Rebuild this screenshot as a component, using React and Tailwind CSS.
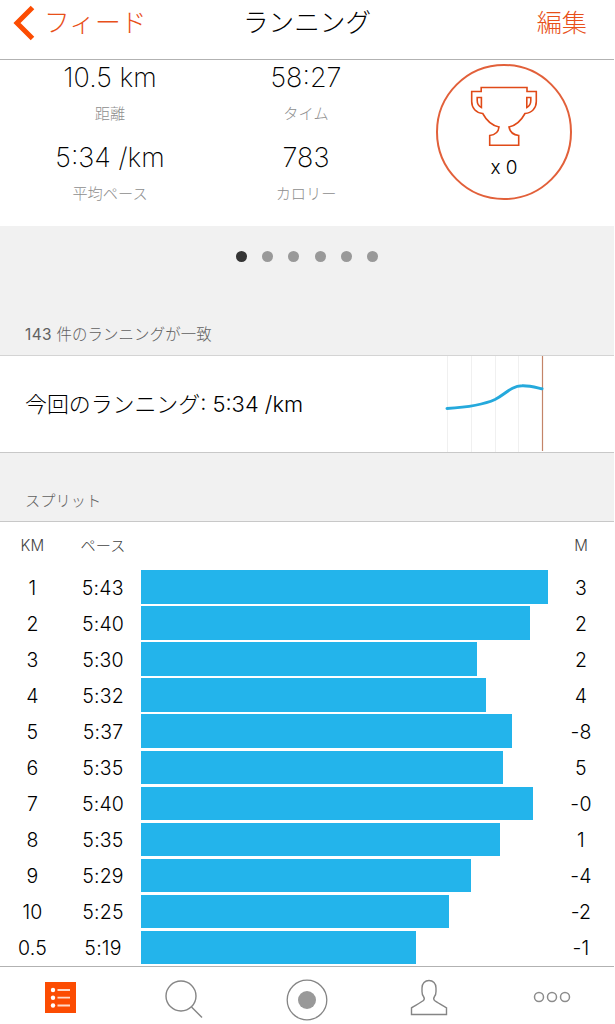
const splits = [
  { km: '1', pace: '5:43', width: 408, elev: '3' },
  { km: '2', pace: '5:40', width: 389, elev: '2' },
  { km: '3', pace: '5:30', width: 335.5, elev: '2' },
  { km: '4', pace: '5:32', width: 345, elev: '4' },
  { km: '5', pace: '5:37', width: 370.5, elev: '-8' },
  { km: '6', pace: '5:35', width: 362, elev: '5' },
  { km: '7', pace: '5:40', width: 391.5, elev: '-0' },
  { km: '8', pace: '5:35', width: 359, elev: '1' },
  { km: '9', pace: '5:29', width: 330, elev: '-4' },
  { km: '10', pace: '5:25', width: 308, elev: '-2' },
  { km: '0.5', pace: '5:19', width: 275, elev: '-1' },
];

function Stat({ value, label }) {
  return (
    <div className="flex h-20 flex-col items-center">
      <div className="text-[27px] leading-[36px] font-extralight text-black">{value}</div>
      <div className="mt-[7px] text-[15.200px] leading-[22px] font-light text-[#8e8e8e]">{label}</div>
    </div>
  );
}

function Trophy() {
  return (
    <svg width="70" height="62" viewBox="0 0 70 62" fill="none" stroke="#e04a18" strokeWidth="1.6">
      <path d="M12.200 2.500H58V6.500H67.300V16.500C67.300 23 63 28 56 28.500C52.500 35 47.500 40.500 40 42C41 47 44.500 50 49.700 50.500V60.300H20.700V50.500C26 50 29.500 47 30 42C22.500 40.500 17.200 35 13.700 28.500C7 28 2.700 23 2.700 16.500V6.500H12.200Z" />
      <path d="M8.200 12.500H12.400V22.500C9.500 21 8.200 18.500 8.200 15.500Z" />
      <path d="M61.800 12.500H57.800V22.500C60.500 21 61.800 18.500 61.800 15.500Z" />
    </svg>
  );
}

function SectionTitle({ children }) {
  return <h2 className="text-[15.200px] leading-[20px] font-light tracking-[0.08px] text-[#606060]">{children}</h2>;
}

export default function App() {
  return (
    <div className="flex h-[1024px] w-[614px] flex-col overflow-hidden bg-white font-['Inter','Noto_Sans_CJK_JP',sans-serif]">
      <header className="grid h-[60px] shrink-0 grid-cols-3 border-b border-[#b2b2b2] pb-[12px]">
        <div className="flex items-center pl-[13px] text-[25.800px] font-light text-[#e8501a]">
          <svg width="22" height="36" viewBox="0 0 22 36" fill="none" stroke="#fc4c02" strokeWidth="5" className="-mt-[2px]">
            <path d="M19.500 2.500L4 18L19.500 33.500" />
          </svg>
          <span className="ml-[9px] whitespace-nowrap">フィード</span>
        </div>
        <h1 className="flex items-center justify-center text-[25.600px] font-light whitespace-nowrap text-black">ランニング</h1>
        <div className="flex items-center justify-end pr-[27px] text-[25.200px] font-light text-[#e8501a]">編集</div>
      </header>

      <section className="flex h-[166px] shrink-0">
        <div className="grid w-[404px] grid-cols-2 content-start pl-3">
          <Stat value="10.5 km" label="距離" />
          <Stat value="58:27" label="タイム" />
          <Stat value="5:34 /km" label="平均ペース" />
          <Stat value="783" label="カロリー" />
        </div>
        <div className="mt-1 ml-8 flex h-[136px] w-[136px] flex-col items-center rounded-full border-2 border-[#e2603a] pt-[19px]">
          <Trophy />
          <div className="mt-[9px] text-[19px] leading-6 font-light text-black">x 0</div>
        </div>
      </section>

      <section className="flex h-[130px] shrink-0 flex-col justify-between border-b border-[#d4d4d4] bg-[#f1f1f1] pt-[25px] pb-[10px]">
        <div className="flex justify-center gap-[15.200px]">
          <i className="h-[11px] w-[11px] rounded-full bg-[#353535]" />
          <i className="h-[11px] w-[11px] rounded-full bg-[#999]" />
          <i className="h-[11px] w-[11px] rounded-full bg-[#999]" />
          <i className="h-[11px] w-[11px] rounded-full bg-[#999]" />
          <i className="h-[11px] w-[11px] rounded-full bg-[#999]" />
          <i className="h-[11px] w-[11px] rounded-full bg-[#999]" />
        </div>
        <div className="pl-[25px]">
          <h2 className="text-[15.400px] leading-[20px] font-light tracking-[0.150px] text-[#606060]">
            <span className="font-normal tracking-[0.4px]">143</span> 件のランニングが一致
          </h2>
        </div>
      </section>

      <section className="flex h-[97px] shrink-0 items-center justify-between border-b border-[#c8c8c8] pr-[67px] pl-[25px]">
        <div className="text-[21.900px] font-light text-black">今回のランニング: 5:34 /km</div>
        <svg width="102" height="96" viewBox="0 0 102 96" fill="none">
          <path d="M2.500 0V96M26.500 0V96M50.500 0V96M73.500 0V96" stroke="#f0f0f0" />
          <path d="M97.500 0V95" stroke="#c48468" strokeWidth="1.200" />
          <path d="M2 52.500C18 51.500 38 49 50 43.500C60 38.500 66 30 77 29.800C84 29.500 91 31.500 97 32.800" stroke="#25a9dc" strokeWidth="3" strokeLinecap="round" />
        </svg>
      </section>

      <section className="flex h-[69px] shrink-0 items-end border-b border-[#c8c8c8] bg-[#f1f1f1] pb-[10px] pl-[25px]">
        <SectionTitle>スプリット</SectionTitle>
      </section>

      <section className="h-[444px] shrink-0">
        <div className="flex h-[47px] items-center pt-px text-[15.200px] font-light text-[#444]">
          <div className="w-[65px] text-center tracking-[0.3px]">KM</div>
          <div className="w-[76px] text-center">ペース</div>
          <div className="ml-auto w-[66px] text-center">M</div>
        </div>
        {splits.map((s) => (
          <div key={s.km} className="flex h-[36.050px] items-center text-[19.500px] font-light tracking-[0.2px] text-black">
            <div className="w-[65px] pt-[3px] text-center">{s.km}</div>
            <div className="w-[76px] pt-[3px] text-center">{s.pace}</div>
            <div className="h-[33.500px] bg-[#23b4eb]" style={{ width: s.width }} />
            <div className="ml-auto w-[66px] pt-[3px] text-center">{s.elev}</div>
          </div>
        ))}
      </section>

      <nav className="grid h-[58px] shrink-0 grid-cols-5 items-center justify-items-center border-t border-[#b2b2b2]">
        <svg width="32" height="32" viewBox="0 0 32 32" className="mb-[-4px]">
          <rect width="31" height="31" x="0" y="0" fill="#fc4c02" />
          <path d="M12.500 8H25M12.500 15.700H25M12.500 23.500H25" stroke="#ffd9c8" strokeWidth="1.800" />
          <circle cx="8" cy="8" r="2.200" fill="#fff" />
          <circle cx="8" cy="15.700" r="2.200" fill="#fff" />
          <circle cx="8" cy="23.500" r="2.200" fill="#fff" />
        </svg>
        <svg width="38" height="38" viewBox="0 0 38 38" fill="none" stroke="#858585" strokeWidth="1.400" className="mb-[-7px]">
          <circle cx="16" cy="16" r="15" />
          <path d="M26.500 27L37 37.500" />
        </svg>
        <svg width="42" height="42" viewBox="0 0 42 42" className="mb-[-8px]">
          <circle cx="21" cy="21" r="19.800" fill="none" stroke="#858585" strokeWidth="1.300" />
          <circle cx="21" cy="21" r="9" fill="#999" />
        </svg>
        <svg width="38" height="38" viewBox="0 0 38 38" fill="none" stroke="#858585" strokeWidth="1.400" className="mr-[2px] mb-[-4px]">
          <path d="M1.500 35.500V28.800C2 28.300 12 22.800 13.500 21.500C15 20 14.500 19 13.500 17.500C12.200 16 12 14.500 12 12.500V9C12 4.500 15 1.500 19 1.500S26 4.500 26 9V12.500C26 14.500 25.800 16 24.500 17.500C23.500 19 23 20 24.500 21.500C26 22.800 35.500 28.300 36.500 28.800V35.500Z" />
        </svg>
        <svg width="38" height="12" viewBox="0 0 38 12" fill="none" stroke="#8c8c8c" strokeWidth="1.500" className="mr-[2px] mb-[-3px]">
          <circle cx="6" cy="6" r="4.500" />
          <circle cx="19" cy="6" r="4.500" />
          <circle cx="32" cy="6" r="4.500" />
        </svg>
      </nav>
    </div>
  );
}
